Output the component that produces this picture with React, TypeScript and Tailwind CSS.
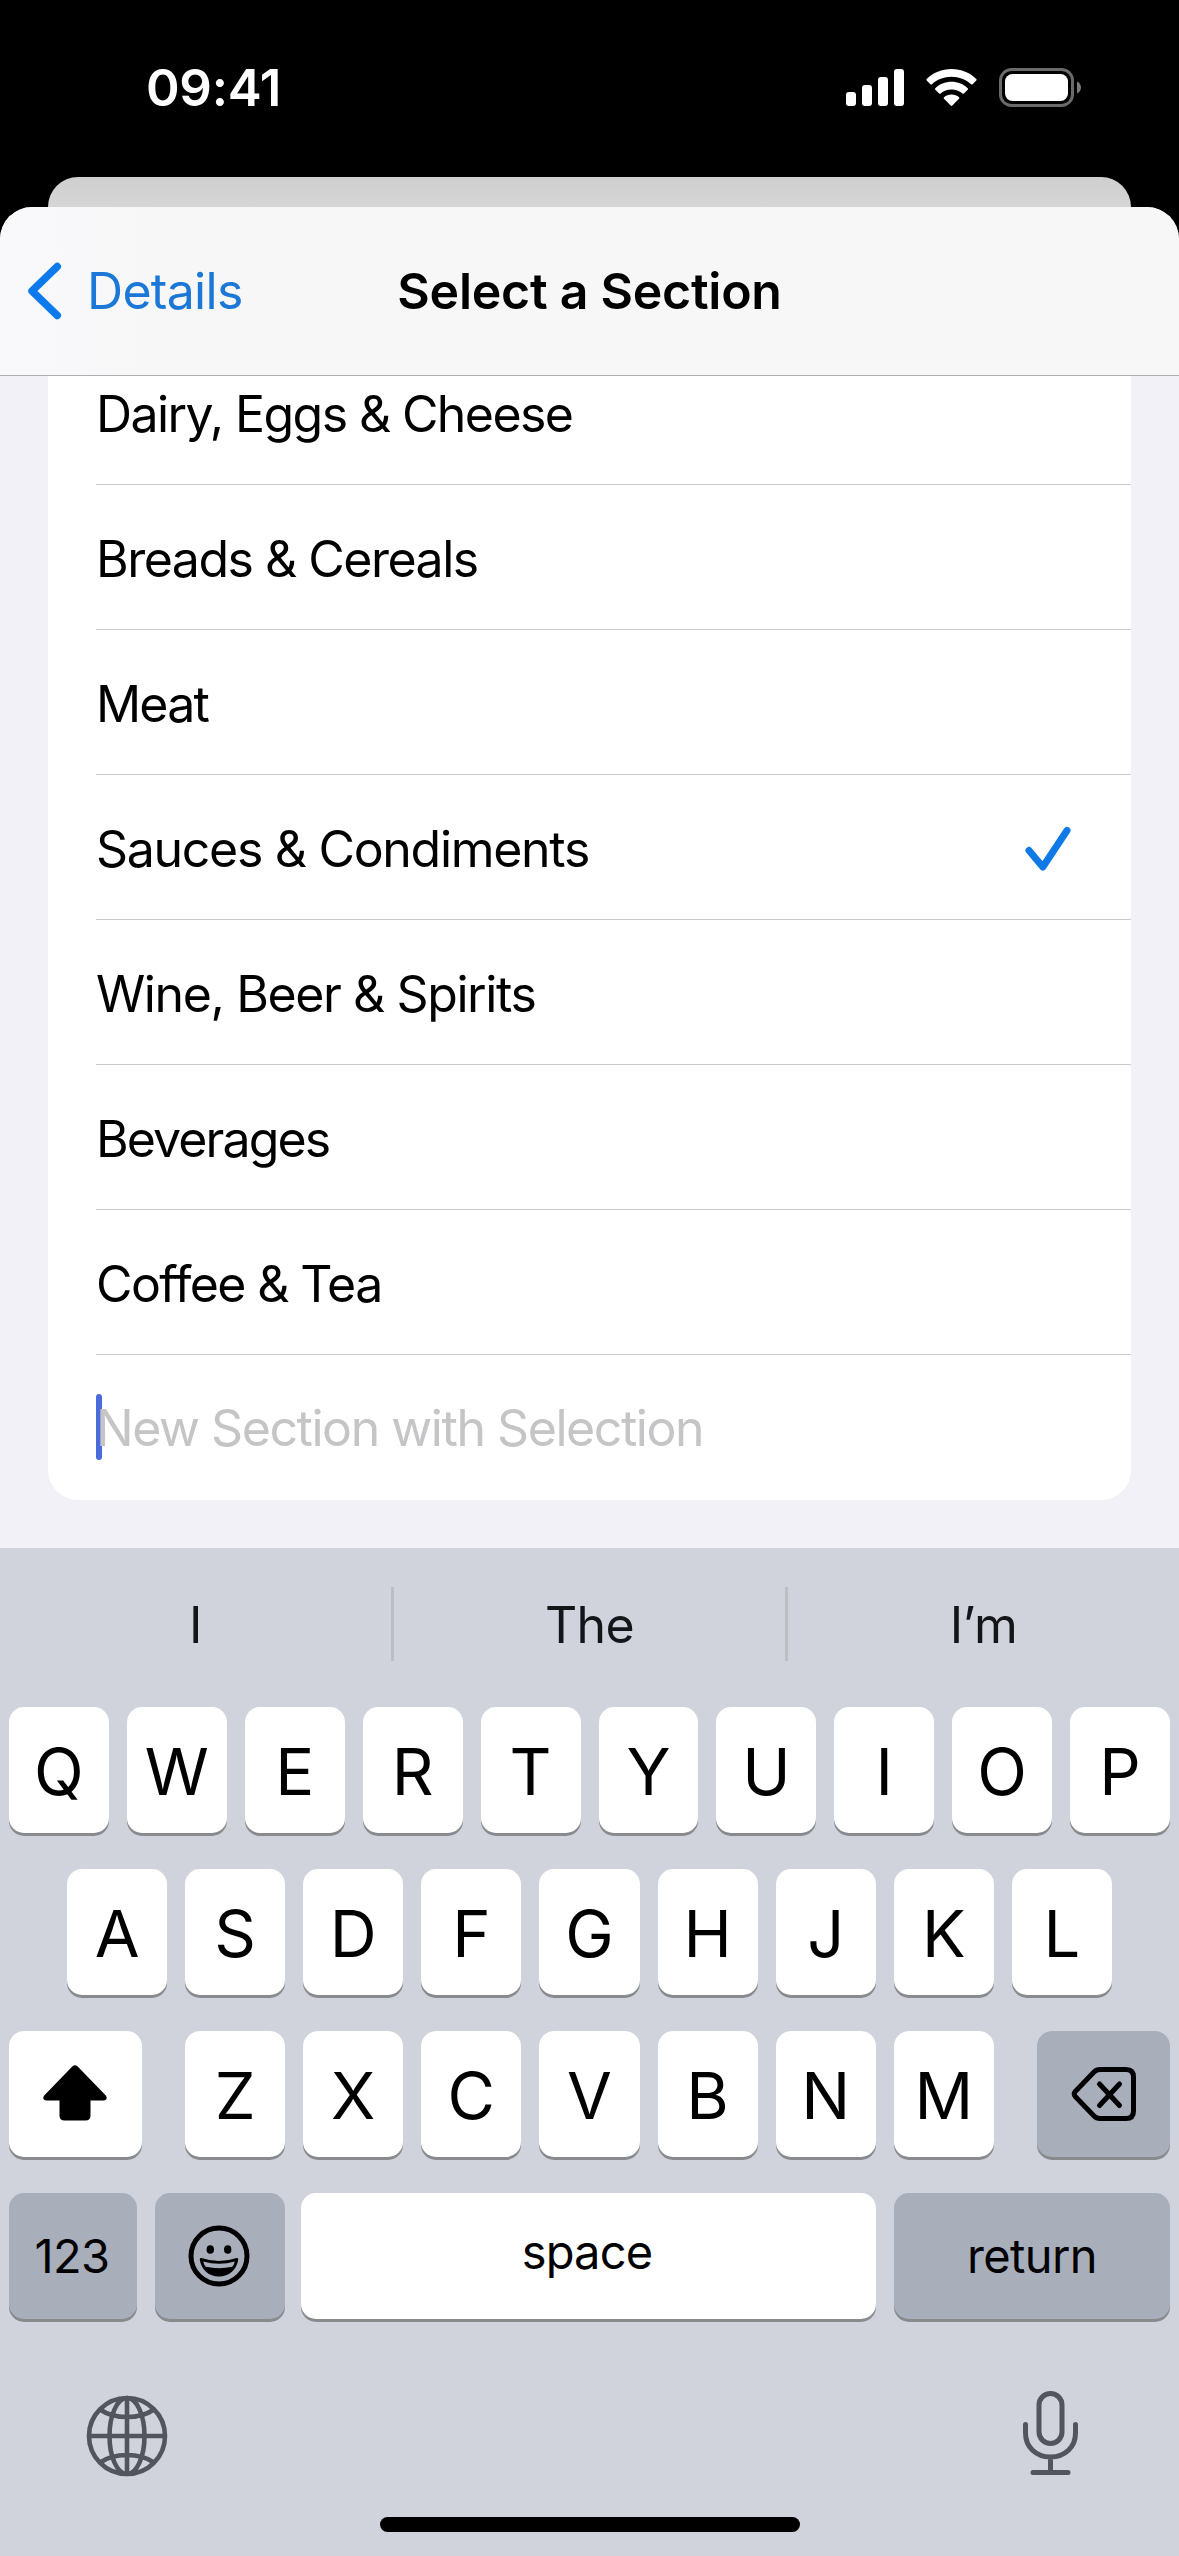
import React from 'react';
import { clsx } from 'clsx';

interface Section {
  name: string;
  tracking: string;
  selected?: boolean;
}

const sections: Section[] = [
  { name: 'Dairy, Eggs & Cheese', tracking: 'tracking-[-1.6px]' },
  { name: 'Breads & Cereals', tracking: 'tracking-[-1.5px]' },
  { name: 'Meat', tracking: 'tracking-[-1.8px]' },
  { name: 'Sauces & Condiments', tracking: 'tracking-[-1.3px]', selected: true },
  { name: 'Wine, Beer & Spirits', tracking: 'tracking-[-1.4px]' },
  { name: 'Beverages', tracking: 'tracking-[-1.9px]' },
  { name: 'Coffee & Tea', tracking: 'tracking-[-1.6px]' },
];

const suggestions = ['I', 'The', 'I’m'];

function StatusBar() {
  return (
    <div className="flex h-[177px] items-start justify-between pl-[146px] pr-[97px] text-white">
      <span className="mt-[58px] text-[51px] leading-[60px] font-semibold tracking-[-0.3px]">09:41</span>
      <div className="mt-[67px] flex h-[41px] items-center">
        <svg width="58" height="41" viewBox="0 0 58 41" fill="currentColor">
          <rect x="0" y="25" width="10" height="14" rx="3" />
          <rect x="16" y="18" width="10" height="21" rx="3" />
          <rect x="32" y="10" width="10" height="29" rx="3" />
          <rect x="48" y="2" width="10" height="37" rx="3" />
        </svg>
        <svg className="ml-[22px]" width="51" height="41" viewBox="0 0 51 41" fill="currentColor">
          <path d="M25.5 2C35.200 2 44 5.800 50.300 12Q51 12.800 50.300 13.600L46.600 17.200Q45.800 17.900 45 17.200C40 12.500 33 9.700 25.500 9.700S11 12.500 6 17.200Q5.200 17.900 4.400 17.200L.7 13.600Q0 12.800 .7 12C7 5.800 15.800 2 25.500 2Z" />
          <path d="M25.500 14.800C31.800 14.800 37.500 17.200 41.700 21.200Q42.400 22 41.700 22.800L37.900 26.500Q37.200 27.200 36.400 26.500C33.500 23.900 29.700 22.400 25.500 22.400S17.500 23.900 14.600 26.500Q13.800 27.200 13.100 26.500L9.300 22.800Q8.600 22 9.300 21.200C13.500 17.200 19.200 14.800 25.500 14.800Z" />
          <path d="M25.500 27.600C28.400 27.600 31 28.600 33 30.300Q33.700 31 33 31.800L26.300 38.600Q25.500 39.400 24.700 38.600L18 31.800Q17.300 31 18 30.300C20 28.600 22.600 27.600 25.500 27.600Z" />
        </svg>
        <svg className="ml-[22px]" width="83" height="41" viewBox="0 0 83 41">
          <rect x="1.500" y="2.500" width="72" height="36" rx="11" fill="none" stroke="#6a6a6a" strokeWidth="3" />
          <rect x="6" y="7" width="63" height="27" rx="7.500" fill="#fff" />
          <path d="M78 14.500C80.500 15.500 82 18 82 20.500S80.500 25.500 78 26.500Z" fill="#7c7c7c" />
        </svg>
      </div>
    </div>
  );
}

function NavBar() {
  return (
    <div className="grid h-[169px] grid-cols-3 items-center rounded-t-[32px] border-b border-[#aeaeb2] bg-linear-to-r from-[#f9f9fc] via-[#f7f7f7] via-15% to-[#f7f7f7]">
      <button className="flex items-center pl-[27px] text-[#1c78d6]">
        <svg width="35" height="58" viewBox="0 0 35 58" fill="none" stroke="#0c7aec" strokeWidth="7.500" strokeLinecap="round" strokeLinejoin="round">
          <path d="M30.300 4.500L5 29L30.300 53.500" />
        </svg>
        <span className="ml-[25px] text-[50px] leading-[60px] tracking-[-0.7px]">Details</span>
      </button>
      <h1 className="text-center text-[50px] leading-[60px] font-semibold tracking-[-0.25px] whitespace-nowrap text-black">
        Select a Section
      </h1>
    </div>
  );
}

function SectionRow({ name, tracking, selected }: Section) {
  return (
    <li className="flex h-[145px] shrink-0 items-center justify-between border-b border-[#c9c9cc] pt-[3px]">
      <span className={clsx('text-[50px] leading-[60px]', tracking)}>{name}</span>
      {selected && (
        <svg className="mr-[60px]" width="46" height="46" viewBox="0 0 46 46" fill="none" stroke="#0f7ae5" strokeWidth="7" strokeLinecap="round" strokeLinejoin="round">
          <path d="M4 24.500L17.800 41L42 4.500" />
        </svg>
      )}
    </li>
  );
}

interface KeyProps {
  children: React.ReactNode;
  className?: string;
  dark?: boolean;
}

function Key({ children, className, dark }: KeyProps) {
  return (
    <button
      className={clsx(
        'flex h-[126px] items-center justify-center rounded-[15px] text-black shadow-[0_3px_0_#888a8e]',
        dark ? 'bg-[#a9aebb]' : 'bg-white',
        className ?? 'min-w-0 flex-1 pt-[3px] text-[65px]',
      )}
    >
      {children}
    </button>
  );
}

function Keyboard() {
  return (
    <div className="flex h-[1008px] flex-col bg-[#d0d3db]">
      <div className="flex h-[159px] items-start pt-[39px]">
        {suggestions.map((word, i) => (
          <div
            key={word}
            className={clsx(
              'flex h-[74px] flex-1 items-center justify-center text-[50px] tracking-[-0.6px] text-[#141518]',
              i < 2 && 'border-r-[3px] border-[#bcbec4]',
            )}
          >
            <span className="pt-[3px]">{word}</span>
          </div>
        ))}
      </div>

      <div className="flex flex-col gap-[36px]">
        <div className="flex gap-[18px] px-[9px]">
          {'QWERTYUIOP'.split('').map((k) => (
            <Key key={k}>{k}</Key>
          ))}
        </div>
        <div className="flex gap-[18px] px-[67px]">
          {'ASDFGHJKL'.split('').map((k) => (
            <Key key={k}>{k}</Key>
          ))}
        </div>
        <div className="flex px-[9px]">
          <Key className="w-[133px] pr-[2px] pb-[2px]">
            <svg width="64" height="56" viewBox="0 0 64 56" fill="currentColor">
              <path d="M29.300 1.600Q32 -.9 34.700 1.600L62.800 30.600Q64.500 33 63 34.600Q62.300 35.500 60.500 35.500H47.500V50.500Q47.500 55.500 42.500 55.500H21.500Q16.500 55.500 16.500 50.500V35.500H3.500Q1.700 35.500 1 34.600Q-.5 33 1.200 30.600Z" />
            </svg>
          </Key>
          <div className="mx-[43px] flex flex-1 gap-[18px]">
            {'ZXCVBNM'.split('').map((k) => (
              <Key key={k}>{k}</Key>
            ))}
          </div>
          <Key dark className="w-[133px]">
            <svg width="66" height="56" viewBox="0 0 66 56" fill="none" stroke="currentColor" strokeWidth="5" strokeLinecap="round" strokeLinejoin="round">
              <path d="M29 3.500H55Q62.500 3.500 62.500 11V45Q62.500 52.500 55 52.500H29Q25.500 52.500 23 50L4.500 30.800Q2 28 4.500 25.200L23 6Q25.500 3.500 29 3.500Z" />
              <path d="M28.500 18L48.500 39.500M48.500 18L28.500 39.500" />
            </svg>
          </Key>
        </div>
        <div className="flex px-[9px]">
          <Key dark className="w-[128px] pr-[2px] text-[47px] tracking-[-0.6px]">
            123
          </Key>
          <Key dark className="ml-[18px] w-[130px] pr-[2px]">
            <svg width="62" height="62" viewBox="0 0 62 62" fill="currentColor">
              <circle cx="31" cy="31" r="28" fill="none" stroke="currentColor" strokeWidth="5" />
              <ellipse cx="22.300" cy="24.500" rx="3.700" ry="4.300" />
              <ellipse cx="39.700" cy="24.500" rx="3.700" ry="4.300" />
              <path fillRule="evenodd" d="M13.500 33Q31 39 48.500 33Q50.500 32.500 50.200 35C48.500 45 41 51.500 31 51.500S13.500 45 11.800 35Q11.500 32.500 13.500 33ZM15.200 36.500Q16 40 17.800 41.800Q31 44.500 44.200 41.800Q46 40 46.800 36.500Q31 41 15.200 36.500Z" />
            </svg>
          </Key>
          <Key className="ml-[16px] mr-[18px] flex-1 pr-[3px] pb-[7px] text-[47px] tracking-[-0.8px]">space</Key>
          <Key dark className="w-[276px] text-[47px] tracking-[-0.6px]">
            return
          </Key>
        </div>
      </div>

      <div className="mt-[71px] flex h-[86px] items-center justify-between pl-[86px] pr-[100px] text-[#52555e]">
        <svg className="mt-[5px]" width="82" height="82" viewBox="0 0 82 82" fill="none" stroke="currentColor" strokeWidth="4.600">
          <circle cx="41" cy="41" r="38" />
          <ellipse cx="41" cy="41" rx="17.500" ry="38" />
          <path d="M41 3V79M3 41H79M14 14.500Q25 22 41 22T68 14.500M14 67.500Q25 60 41 60T68 67.500" />
        </svg>
        <svg width="57" height="86" viewBox="0 0 57 86" fill="none" stroke="currentColor" strokeWidth="5" strokeLinecap="round">
          <rect x="17" y="3.500" width="23" height="50" rx="11.500" />
          <path d="M3.500 34.500V43C3.500 57 14 67 28.500 67S53.500 57 53.500 43V34.500M28.500 67V82.500M11 82.500H46" />
        </svg>
      </div>
      <div className="mx-auto mt-[41px] h-[15px] w-[420px] rounded-full bg-black" />
    </div>
  );
}

export default function App() {
  return (
    <div className="flex h-[2556px] w-[1179px] flex-col overflow-hidden bg-black font-[Inter,'Liberation_Sans',sans-serif]">
      <StatusBar />
      <div className="mx-[48px] h-[30px] shrink-0 rounded-t-[30px] bg-linear-to-b from-[#cfcfcf] to-[#d6d6d6]" />
      <div className="flex h-[1341px] flex-col overflow-hidden rounded-t-[32px] bg-[#f2f1f7]">
        <NavBar />
        {/* list is scrolled, so the first row sits partly under the nav bar */}
        <div className="flex h-[1124px] flex-col justify-end overflow-hidden">
          <ul className="mx-[48px] flex flex-col rounded-b-[30px] bg-white pl-[48px] text-black">
            {sections.map((section) => (
              <SectionRow key={section.name} {...section} />
            ))}
            <li className="flex h-[145px] shrink-0 items-center">
              <span className="mb-[2px] h-[66px] w-[6px] rounded-full bg-[#4a6cdb]" />
              <span className="-ml-[6px] text-[50px] leading-[60px] tracking-[-1.45px] text-[#c5c5c7]">
                New Section with Selection
              </span>
            </li>
          </ul>
        </div>
      </div>
      <Keyboard />
    </div>
  );
}
